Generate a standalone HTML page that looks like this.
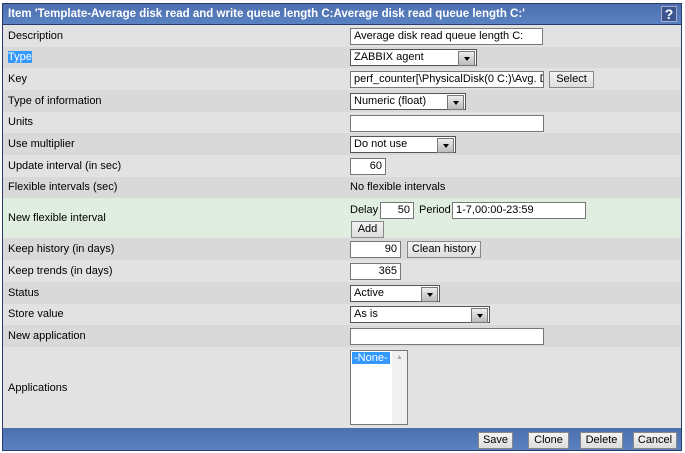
<!DOCTYPE html>
<html><head><style>
*{margin:0;padding:0;box-sizing:border-box}
body{width:685px;height:453px;background:#fff;font-family:"Liberation Sans",sans-serif;font-size:11px;color:#000;position:relative;overflow:hidden}
#f{position:absolute;left:2px;top:3px;width:680px;height:448px;border:1px solid #2a3a6a;background:#e2e2e2}
.hd{height:21px;background:linear-gradient(#4d6fae,#5a82c2);color:#fff;font-weight:bold;font-size:11.5px;line-height:20px;padding-left:5px;border-bottom:1px solid #2a3a6a;position:relative}
.q{position:absolute;right:4px;top:2px;width:16px;height:16px;border:1px solid #aac;background:#3a5590;color:#fff;font-size:14px;line-height:15px;text-align:center}
.r{position:absolute;left:0;width:678px}
.r .l{position:absolute;left:5px}
.r .c{position:absolute;left:347px}
.a{background:#e2e2e2}.b{background:#d9d9d9}.g{background:#dfeee0}
.in{position:absolute;height:17px;border:1px solid #777;background:#fff;padding:1px 3px;line-height:13px;white-space:nowrap;overflow:hidden}
.sel{position:absolute;height:17px;border:1px solid #555;background:#fff;padding:1px 3px;line-height:13px}
.sel:after{content:"";position:absolute;right:1px;top:1px;width:15px;height:13px;background:linear-gradient(#eee,#bbb);border:1px solid #777}
.sel i{position:absolute;right:6px;top:7px;border:3px solid transparent;border-top:4px solid #000;z-index:2}
.btn{position:absolute;height:17px;border:1px solid #888;background:linear-gradient(#f4f4f4,#ddd);text-align:center;line-height:15px}
.ft{position:absolute;left:0;top:424px;width:678px;height:22px;background:linear-gradient(#4d6fae,#5a82c2)}
</style></head><body>
<div id="f">
<div class="hd">Item 'Template-Average disk read and write queue length C:Average disk read queue length C:'<div class="q">?</div></div>
<div class="r a" style="top:21px;height:22px"><span class="l" style="top:5px">Description</span><div class="in" style="left:347px;top:3px;width:193px">Average disk read queue length C:</div></div>
<div class="r b" style="top:43px;height:21px"><span class="l" style="top:4px;background:#3399ff;color:#fff">Type</span><div class="sel" style="left:347px;top:2px;width:127px">ZABBIX agent<i></i></div></div>
<div class="r a" style="top:64px;height:22px"><span class="l" style="top:5px">Key</span><div class="in" style="left:347px;top:3px;width:194px">perf_counter[\PhysicalDisk(0 C:)\Avg. Disk</div><div class="btn" style="left:546px;top:3px;width:45px">Select</div></div>
<div class="r b" style="top:86px;height:22px"><span class="l" style="top:5px">Type of information</span><div class="sel" style="left:347px;top:3px;width:116px">Numeric (float)<i></i></div></div>
<div class="r a" style="top:108px;height:21px"><span class="l" style="top:4px">Units</span><div class="in" style="left:347px;top:3px;width:194px"></div></div>
<div class="r b" style="top:129px;height:22px"><span class="l" style="top:5px">Use multiplier</span><div class="sel" style="left:347px;top:3px;width:106px">Do not use<i></i></div></div>
<div class="r a" style="top:151px;height:22px"><span class="l" style="top:5px">Update interval (in sec)</span><div class="in" style="left:347px;top:3px;width:36px;text-align:right">60</div></div>
<div class="r b" style="top:173px;height:21px"><span class="l" style="top:4px">Flexible intervals (sec)</span><span class="c" style="top:4px">No flexible intervals</span></div>
<div class="r g" style="top:194px;height:40px"><span class="l" style="top:14px">New flexible interval</span><span class="c" style="top:6px">Delay</span><div class="in" style="left:377px;top:4px;width:34px;text-align:right">50</div><span style="position:absolute;left:416px;top:6px">Period</span><div class="in" style="left:449px;top:4px;width:134px">1-7,00:00-23:59</div><div class="btn" style="left:348px;top:23px;width:33px">Add</div></div>
<div class="r b" style="top:234px;height:22px"><span class="l" style="top:5px">Keep history (in days)</span><div class="in" style="left:347px;top:3px;width:51px;text-align:right">90</div><div class="btn" style="left:404px;top:3px;width:74px">Clean history</div></div>
<div class="r a" style="top:256px;height:22px"><span class="l" style="top:5px">Keep trends (in days)</span><div class="in" style="left:347px;top:3px;width:51px;text-align:right">365</div></div>
<div class="r b" style="top:278px;height:22px"><span class="l" style="top:5px">Status</span><div class="sel" style="left:347px;top:3px;width:90px">Active<i></i></div></div>
<div class="r a" style="top:300px;height:21px"><span class="l" style="top:4px">Store value</span><div class="sel" style="left:347px;top:2px;width:140px">As is<i></i></div></div>
<div class="r b" style="top:321px;height:22px"><span class="l" style="top:5px">New application</span><div class="in" style="left:347px;top:3px;width:194px"></div></div>
<div class="r a" style="top:343px;height:81px"><span class="l" style="top:35px">Applications</span>
<div class="in" style="left:347px;top:3px;width:58px;height:75px;padding:1px"><span style="background:#3399ff;color:#fff;padding:0 2px">-None-</span><div style="position:absolute;right:0;top:0;width:15px;height:73px;background:#f0f0f0;color:#aaa;font-size:7px;text-align:center">▲<br><br><br><br><br><br><br>▼</div></div></div>
<div class="ft">
<div class="btn" style="left:475px;top:4px;width:35px">Save</div>
<div class="btn" style="left:525px;top:4px;width:41px">Clone</div>
<div class="btn" style="left:577px;top:4px;width:43px">Delete</div>
<div class="btn" style="left:630px;top:4px;width:44px">Cancel</div>
</div>
</div>
</body></html>
